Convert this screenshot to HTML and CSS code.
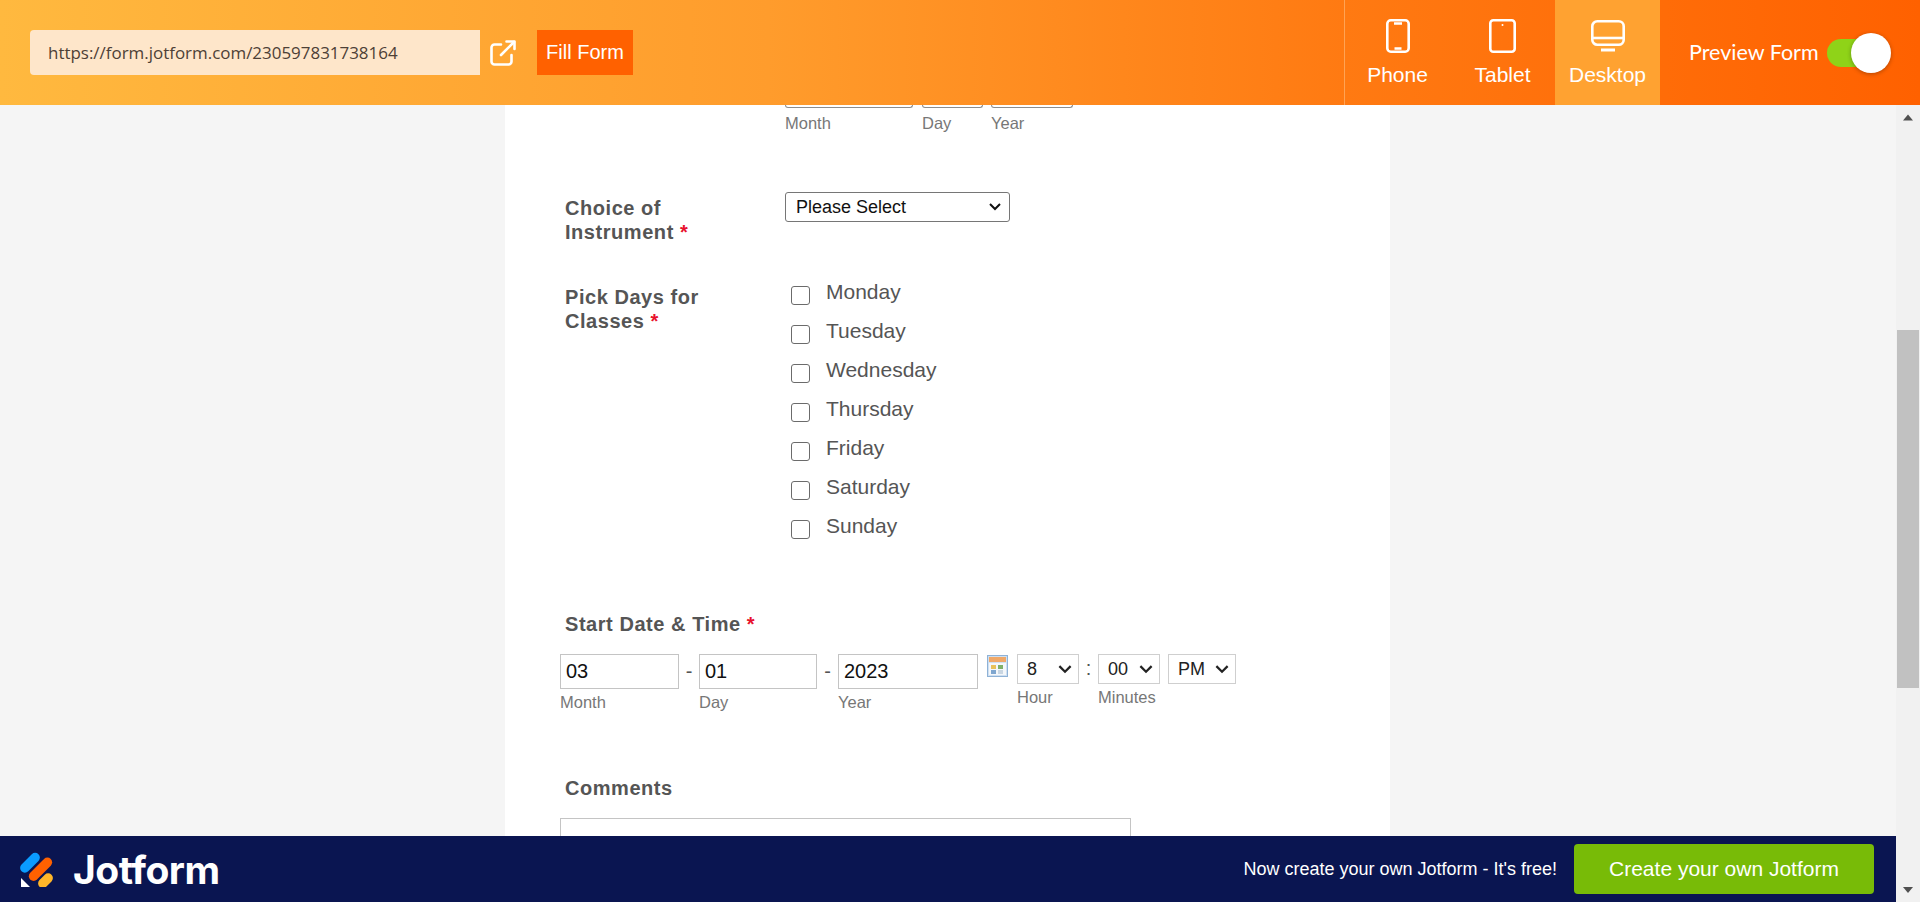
FILE: index.html
```html
<!DOCTYPE html>
<html lang="en">
<head>
  <meta charset="UTF-8">
  <title>Form Preview</title>
  <link rel="stylesheet" href="styles.css">
</head>
<body>
  <!-- Top bar -->
  <header class="topbar">
    <div class="url-box">https://form.jotform.com/230597831738164</div>
    <svg class="open-icon" viewBox="0 0 26 26" fill="none" stroke="#fff" stroke-width="2.6" stroke-linecap="round" stroke-linejoin="round">
      <path d="M11 4.500H4.500A3 3 0 0 0 1.500 7.500v14a3 3 0 0 0 3 3h14a3 3 0 0 0 3-3V15"/>
      <path d="M11 15L24 2"/>
      <path d="M16.500 1.500h8V9"/>
    </svg>
    <a class="fill-btn">Fill Form</a>
    <div class="spacer"></div>
    <nav class="devices">
      <div class="device">
        <svg class="device-icon" width="24" height="34" viewBox="0 0 24 34" fill="none" stroke="#fff" stroke-width="2.600">
          <rect x="1.300" y="1.300" width="21.400" height="31.400" rx="3.500"/>
          <path d="M8 4.500h8M8.500 29.500h7" stroke-width="2.400"/>
        </svg>
        <span>Phone</span>
      </div>
      <div class="device">
        <svg class="device-icon" width="27" height="34" viewBox="0 0 27 34" fill="none" stroke="#fff" stroke-width="2.600">
          <rect x="1.300" y="1.300" width="24.400" height="31.400" rx="3"/>
          <circle cx="13.500" cy="6" r="1" fill="#fff" stroke="none"/>
        </svg>
        <span>Tablet</span>
      </div>
      <div class="device active">
        <svg class="device-icon" width="34" height="34" viewBox="0 0 34 34" fill="none" stroke="#fff" stroke-width="2.600">
          <rect x="1.300" y="2.300" width="31.400" height="23.400" rx="5"/>
          <path d="M1.500 19h31"/>
          <path d="M10 31h14" stroke-width="3"/>
        </svg>
        <span>Desktop</span>
      </div>
    </nav>
    <div class="preview">
      <span class="preview-label">Preview Form</span>
      <div class="toggle"><div class="knob"></div></div>
    </div>
  </header>

  <div class="below">
    <div class="page-col">
      <main class="page">
        <div class="form-card">
          <!-- Birth date field, scrolled mostly out of view -->
          <div class="field-top">
            <div class="sub-col"><div class="cut-input w-month"></div><span class="sublabel">Month</span></div>
            <div class="sub-col"><div class="cut-input w-day"></div><span class="sublabel">Day</span></div>
            <div class="sub-col"><div class="cut-input w-year"></div><span class="sublabel">Year</span></div>
          </div>

          <div class="field field-choice">
            <label class="field-label">Choice of Instrument <span class="req">*</span></label>
            <div class="select-box">
              <span>Please Select</span>
              <svg class="chev" width="12" height="8" viewBox="0 0 12 8" fill="none" stroke="#111" stroke-width="2"><path d="M1 1l5 5 5-5"/></svg>
            </div>
          </div>

          <div class="field field-days">
            <label class="field-label">Pick Days for Classes <span class="req">*</span></label>
            <div class="checks">
              <div class="check"><i class="box"></i><span>Monday</span></div>
              <div class="check"><i class="box"></i><span>Tuesday</span></div>
              <div class="check"><i class="box"></i><span>Wednesday</span></div>
              <div class="check"><i class="box"></i><span>Thursday</span></div>
              <div class="check"><i class="box"></i><span>Friday</span></div>
              <div class="check"><i class="box"></i><span>Saturday</span></div>
              <div class="check"><i class="box"></i><span>Sunday</span></div>
            </div>
          </div>

          <div class="field-date">
            <label class="field-label wide">Start Date &amp; Time <span class="req">*</span></label>
            <div class="date-row">
              <div class="sub-col"><div class="date-input w-m2">03</div><span class="sublabel">Month</span></div>
              <span class="dash">-</span>
              <div class="sub-col"><div class="date-input w-d2">01</div><span class="sublabel">Day</span></div>
              <span class="dash dash-wide">-</span>
              <div class="sub-col"><div class="date-input w-y2">2023</div><span class="sublabel">Year</span></div>
              <svg class="cal" width="21" height="22" viewBox="0 0 21 22">
                <rect x=".5" y=".5" width="20" height="21" fill="#cfe0f2" stroke="#8fb2d6"/>
                <rect x="2" y="2" width="17" height="5" fill="#f0a868"/>
                <rect x="2" y="8" width="17" height="12" fill="#f4f7fa"/>
                <rect x="4" y="10" width="5" height="4" fill="#e8c25a"/>
                <rect x="11" y="10" width="5" height="4" fill="#7fb069"/>
                <rect x="4" y="15" width="5" height="4" fill="#7fa6cf"/>
                <rect x="11" y="15" width="5" height="4" fill="#c9d6e2"/>
              </svg>
              <div class="sub-col time-hour">
                <div class="time-select"><span>8</span><svg width="14" height="9" viewBox="0 0 12 8" fill="none" stroke="#222" stroke-width="2"><path d="M1 1l5 5 5-5"/></svg></div>
                <span class="sublabel">Hour</span>
              </div>
              <span class="colon">:</span>
              <div class="sub-col time-min">
                <div class="time-select"><span>00</span><svg width="14" height="9" viewBox="0 0 12 8" fill="none" stroke="#222" stroke-width="2"><path d="M1 1l5 5 5-5"/></svg></div>
                <span class="sublabel">Minutes</span>
              </div>
              <div class="sub-col time-ampm">
                <div class="time-select"><span>PM</span><svg width="14" height="9" viewBox="0 0 12 8" fill="none" stroke="#222" stroke-width="2"><path d="M1 1l5 5 5-5"/></svg></div>
              </div>
            </div>
          </div>

          <div class="field-comments">
            <label class="field-label wide">Comments</label>
            <div class="textarea"></div>
          </div>
        </div>
      </main>

      <!-- Bottom banner -->
      <footer class="banner">
        <div class="brand">
          <svg class="brand-mark" width="34" height="36" viewBox="0 0 34 36">
            <rect x="-2" y="7" width="24" height="9.500" rx="4.750" fill="#0a9bff" transform="rotate(-45 10 11.750)" />
            <rect x="6" y="13.500" width="29" height="9.500" rx="4.750" fill="#ff6100" transform="rotate(-45 20.500 18.250)"/>
            <rect x="17" y="25" width="17" height="9.500" rx="4.750" fill="#ffb629" transform="rotate(-45 25.500 29.750)"/>
            <path d="M1 27v8.500a.5.5 0 0 0 .5.5H10z" fill="#fff"/>
          </svg>
          <span class="brand-name">Jotform</span>
        </div>
        <div class="banner-right">
          <span class="banner-text">Now create your own Jotform - It's free!</span>
          <a class="create-btn">Create your own Jotform</a>
        </div>
      </footer>
    </div>

    <!-- Scrollbar -->
    <div class="scrollbar">
      <svg class="arrow" width="24" height="24" viewBox="0 0 24 24"><path d="M7 15.500h10L12 9.500z" fill="#505050"/></svg>
      <div class="track"><div class="thumb"></div></div>
      <svg class="arrow" width="24" height="24" viewBox="0 0 24 24"><path d="M7 9h10l-5 6z" fill="#505050"/></svg>
    </div>
  </div>
</body>
</html>
```

FILE: styles.css
```css
/* General */
html, body {
  height: 100%;
}
body {
  margin: 0;
  display: flex;
  flex-direction: column;
  overflow: hidden;
  font-family: "Liberation Sans", Arial, sans-serif;
  background: #f5f5f5;
}

/* Top bar */
.topbar {
  height: 105px;
  flex: none;
  display: flex;
  align-items: center;
  padding-left: 30px;
  background: linear-gradient(90deg, #ffb93f 0%, #ff9c2c 40%, #ff7a12 70%, #ff6100 100%);
  box-sizing: border-box;
}
.url-box {
  width: 450px;
  height: 45px;
  line-height: 45px;
  padding-left: 18px;
  box-sizing: border-box;
  background: #fee6ca;
  border-radius: 4px 0 0 4px;
  font-family: "Open Sans", sans-serif;
  font-size: 16.950px;
  color: #4d4036;
}
.open-icon {
  width: 26px;
  height: 26px;
  margin-left: 10px;
}
.fill-btn {
  margin-left: 21px;
  width: 96px;
  height: 45px;
  line-height: 44px;
  text-align: center;
  background: #ff6100;
  color: #fff;
  font-size: 20px;
}
.spacer {
  flex: 1;
}
.devices {
  display: flex;
  align-self: stretch;
  border-left: 1px solid #ffa354;
}
.device {
  width: 105px;
  display: flex;
  flex-direction: column;
  align-items: center;
  padding-top: 19px;
  box-sizing: border-box;
  color: #fff;
  font-size: 21px;
}
.device span {
  margin-top: 10px;
  line-height: 24px;
}
.device-icon {
  display: block;
}
.device.active {
  background: #ffa231;
}
.preview {
  width: 260px;
  display: flex;
  align-items: center;
  box-sizing: border-box;
  padding-left: 29px;
}
.preview-label {
  font-family: Lato, sans-serif;
  font-size: 21.500px;
  color: #fff;
  width: 138px;
  margin-top: -2px;
}
.toggle {
  width: 52px;
  height: 28px;
  border-radius: 14px;
  background: #8fd318;
  position: relative;
}
.knob {
  position: absolute;
  right: -12px;
  top: -6px;
  width: 40px;
  height: 40px;
  border-radius: 50%;
  background: #fff;
  box-shadow: 0 1px 4px rgba(0, 0, 0, 0.3);
}

/* Below the top bar */
.below {
  flex: 1;
  min-height: 0;
  display: flex;
}
.page-col {
  flex: 1;
  min-width: 0;
  display: flex;
  flex-direction: column;
}
.page {
  flex: 1;
  min-height: 0;
  overflow: hidden;
  display: flex;
  justify-content: center;
}
.form-card {
  width: 885px;
  height: 1000px;
  margin-right: 1px;
  background: #fff;
  color: #555;
  box-sizing: border-box;
  padding-left: 55px;
}

/* Fields */
.field-top {
  display: flex;
  margin-left: 225px;
  gap: 9px;
  height: 30px;
}
.sub-col {
  display: flex;
  flex-direction: column;
}
.cut-input {
  height: 3px;
  border: 1px solid #8d8d8d;
  border-top: none;
  border-radius: 0 0 3px 3px;
  box-sizing: border-box;
}
.w-month { width: 128px; }
.w-day { width: 61px; margin-right: -1px; }
.w-year { width: 82px; }
.sublabel {
  font-size: 16.500px;
  color: #777;
  line-height: 20px;
  margin-top: 5px;
}
.field {
  display: flex;
  margin-left: 5px;
}
.field-label {
  display: block;
  width: 220px;
  padding-right: 45px;
  box-sizing: border-box;
  font-size: 20px;
  font-weight: bold;
  letter-spacing: .55px;
  line-height: 24px;
  color: #555;
}
.field-label.wide {
  width: auto;
  margin-left: 5px;
  padding-right: 0;
}
.req {
  color: #e8112d;
}
.field-choice {
  margin-top: 57px;
  height: 93px;
}
.field-choice .field-label {
  margin-top: 4px;
}
.select-box {
  width: 225px;
  height: 30px;
  box-sizing: border-box;
  border: 1px solid #767676;
  border-radius: 3px;
  background: #fff;
  color: #111;
  font-size: 18px;
  display: flex;
  align-items: center;
  justify-content: space-between;
  padding: 0 8px 0 10px;
}
.chev {
  flex: none;
}
.field-days {
  height: 327px;
}
.checks {
  display: flex;
  flex-direction: column;
  margin-top: -5px;
}
.check {
  height: 39px;
  display: flex;
  align-items: flex-start;
  font-size: 21px;
  color: #555;
}
.check span {
  line-height: 24px;
}
.box {
  width: 19px;
  height: 19px;
  margin: 6px 16px 0 6px;
  box-sizing: border-box;
  border: 1.500px solid #6b6b6b;
  border-radius: 3px;
  display: block;
}

/* Date and time */
.date-row {
  display: flex;
  align-items: flex-start;
  margin-top: 18px;
}
.date-input {
  height: 35px;
  line-height: 33px;
  box-sizing: border-box;
  border: 1px solid #c4c4c4;
  padding-left: 5px;
  font-size: 20px;
  color: #111;
}
.date-row .sublabel {
  margin-top: 3px;
}
.w-m2 { width: 119px; }
.w-d2 { width: 118px; }
.w-y2 { width: 140px; }
.dash {
  width: 20px;
  text-align: center;
  font-size: 20px;
  line-height: 35px;
  color: #555;
}
.dash-wide {
  width: 21px;
}
.cal {
  margin: 1px 9px 0 9px;
  flex: none;
}
.time-hour { width: 62px; }
.time-min { width: 62px; margin-right: 8px; }
.time-ampm { width: 68px; }
.time-select {
  height: 30px;
  box-sizing: border-box;
  border: 1px solid #cfcfcf;
  display: flex;
  align-items: center;
  justify-content: space-between;
  padding: 0 6px 0 9px;
  font-size: 18px;
  color: #222;
}
.colon {
  width: 19px;
  text-align: center;
  font-size: 20px;
  line-height: 28px;
}
.field-comments {
  margin-top: 64px;
}
.textarea {
  width: 571px;
  height: 100px;
  margin-top: 18px;
  border: 1px solid #c4c4c4;
  box-sizing: border-box;
}

/* Bottom banner */
.banner {
  height: 66px;
  flex: none;
  background: #0a1551;
  display: flex;
  align-items: center;
  justify-content: space-between;
  padding: 0 22px 0 20px;
  color: #fff;
}
.brand {
  display: flex;
  align-items: center;
}
.brand-name {
  font-family: Inter, sans-serif;
  font-weight: 700;
  font-size: 39px;
  letter-spacing: -.5px;
  margin-left: 19px;
}
.banner-right {
  display: flex;
  align-items: center;
}
.banner-text {
  font-size: 18px;
}
.create-btn {
  margin-left: 17px;
  width: 300px;
  height: 50px;
  line-height: 50px;
  text-align: center;
  background: #78bb07;
  border-radius: 4px;
  font-size: 21px;
  color: #fff;
}

/* Scrollbar */
.scrollbar {
  width: 24px;
  flex: none;
  display: flex;
  flex-direction: column;
  background: #f1f1f1;
}
.arrow {
  flex: none;
  display: block;
}
.track {
  flex: 1;
  padding: 201px 1px 0;
}
.thumb {
  height: 358px;
  background: #c1c1c1;
}
```
